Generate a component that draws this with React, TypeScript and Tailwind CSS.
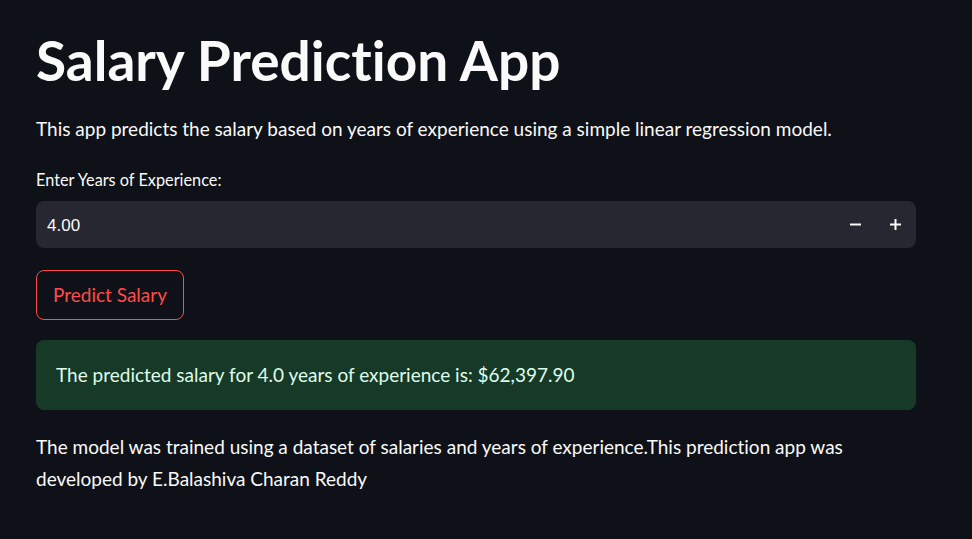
import React from "react";

const font = { fontFamily: "Lato, 'Noto Sans', sans-serif" };

export default function App() {
  return (
    <div className="min-h-[539px] w-full bg-[#0e1117] text-[#fafafa] [font-variant-ligatures:none]" style={font}>
      <div className="mx-[36px] w-[880px] pt-[30px] flex flex-col">
        <h1 className="text-[55px] leading-[60px] font-bold">
          Salary Prediction App
        </h1>
        <p className="mt-[23px] text-[19px] leading-[32px]">
          This app predicts the salary based on years of experience using a simple linear regression model.
        </p>
        <label className="mt-[23px] text-[16.3px] leading-[24px]">
          Enter Years of Experience:
        </label>
        <div className="mt-[9px] h-[47px] rounded-[8px] bg-[#262730] flex items-center pl-[11px] pr-[1px]">
          <span className="flex-1 pt-[2px] text-[17px] font-['Liberation_Sans',sans-serif]">4.00</span>
          <button className="w-[40px] h-[40px] flex items-center justify-center">
            <svg width="11" height="11" viewBox="0 0 11 11">
              <rect x="0" y="4.5" width="11" height="2" fill="#fafafa" />
            </svg>
          </button>
          <button className="w-[40px] h-[40px] flex items-center justify-center">
            <svg width="11" height="11" viewBox="0 0 11 11">
              <rect x="0" y="4.5" width="11" height="2" fill="#fafafa" />
              <rect x="4.5" y="0" width="2" height="11" fill="#fafafa" />
            </svg>
          </button>
        </div>
        <div className="mt-[22px]">
          <button className="h-[50px] w-[148px] rounded-[8px] border border-[#ff4b4b] text-[#ff4b4b] text-[19px] bg-transparent">
            Predict Salary
          </button>
        </div>
        <div className="mt-[20px] h-[70px] rounded-[8px] bg-[#173928] text-[#dffde9] flex items-center px-[20px] text-[19px]">
          The predicted salary for 4.0 years of experience is: $62,397.90
        </div>
        <p className="mt-[21px] text-[19px] leading-[32px]">
          The model was trained using a dataset of salaries and years of experience.This prediction app was
          <br />
          developed by E.Balashiva Charan Reddy
        </p>
      </div>
    </div>
  );
}
